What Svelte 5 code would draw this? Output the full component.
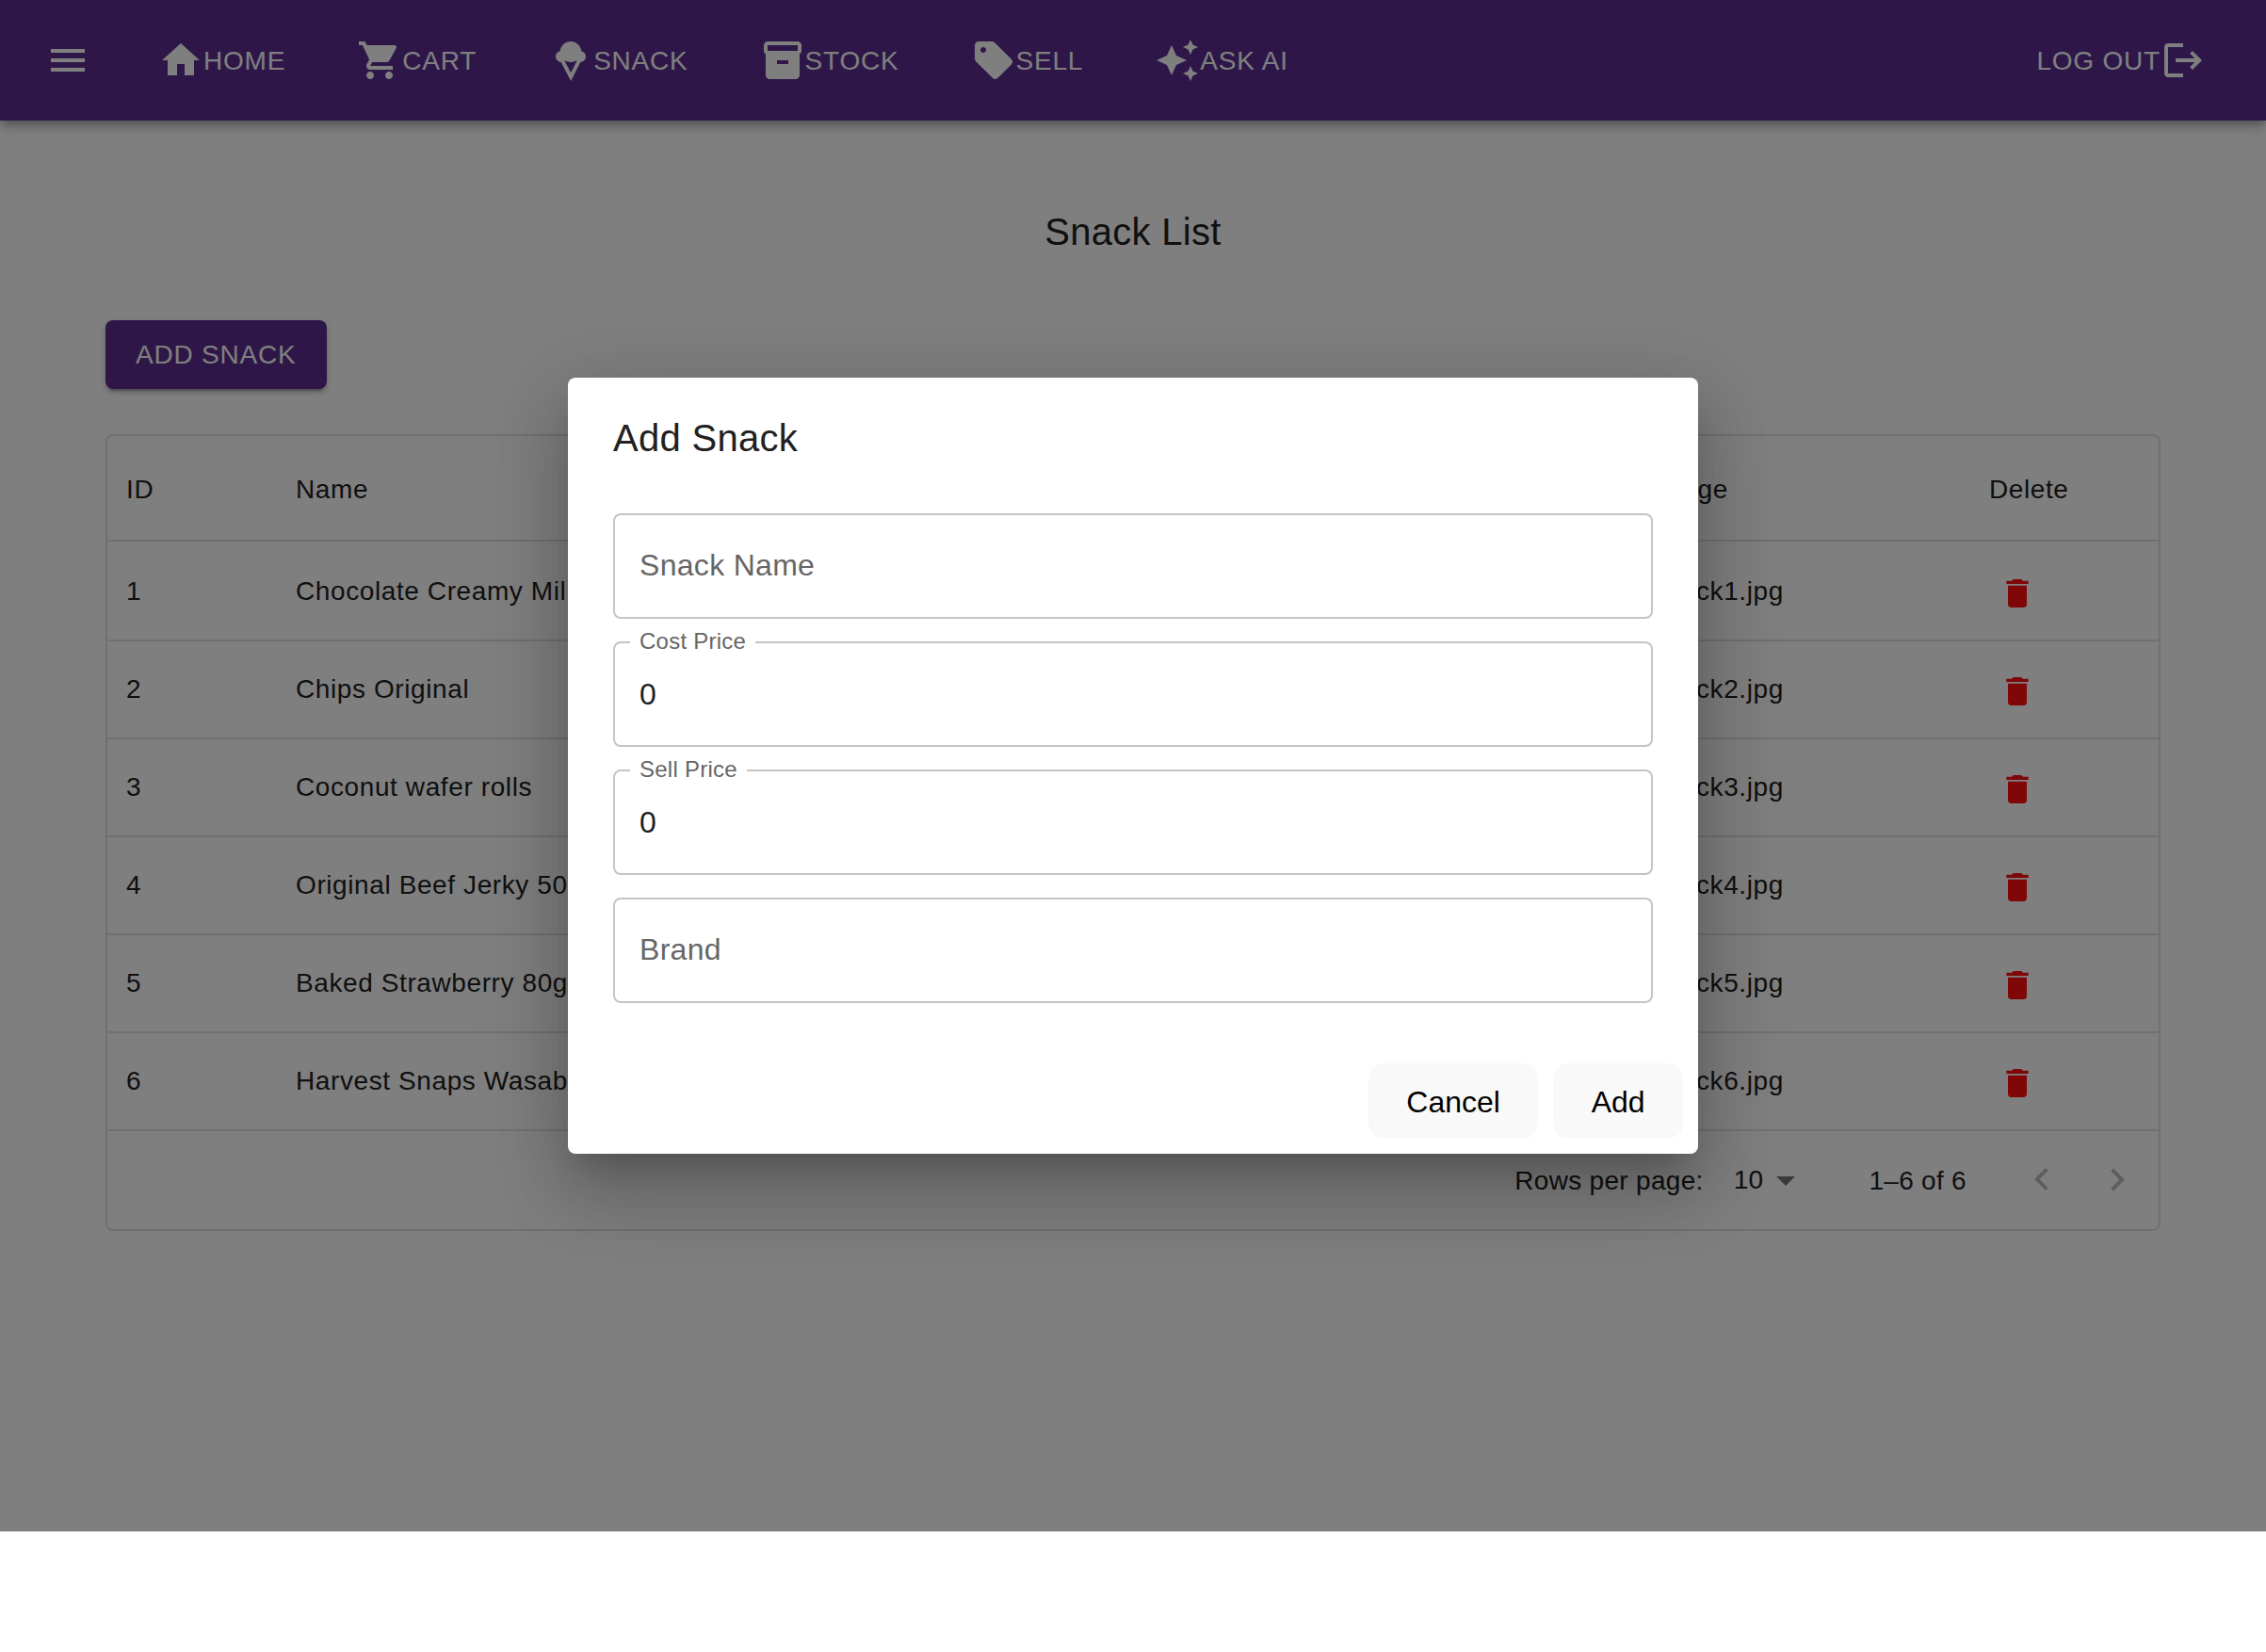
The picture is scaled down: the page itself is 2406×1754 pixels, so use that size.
<script>
  const nav = [
    { label: 'HOME', d: 'M10 20v-6h4v6h5v-8h3L12 3 2 12h3v8z' },
    {
      label: 'CART',
      d: 'M7 18c-1.1 0-1.99.9-1.99 2S5.9 22 7 22s2-.9 2-2-.9-2-2-2zM1 2v2h2l3.6 7.59-1.35 2.45c-.16.28-.25.61-.25.96 0 1.1.9 2 2 2h12v-2H7.42c-.14 0-.25-.11-.25-.25l.03-.12.9-1.63h7.45c.75 0 1.41-.41 1.75-1.03l3.58-6.49c.08-.14.12-.31.12-.48 0-.55-.45-1-1-1H5.21l-.94-2H1zm16 16c-1.1 0-1.99.9-1.99 2s.89 2 1.99 2 2-.9 2-2-.9-2-2-2z'
    },
    {
      label: 'SNACK',
      d: 'M8.79 12.4l3.26 6.22 3.17-6.21c-.11-.08-.21-.16-.3-.25-.77.53-1.8.84-2.92.84s-2.15-.31-2.92-.84c-.09.09-.19.17-.29.24zm-1.96.59C5.25 12.9 4 11.6 4 10.02c0-1.43 1.01-2.63 2.36-2.92C6.65 4.23 9.07 2 12 2s5.35 2.23 5.64 5.1C18.99 7.38 20 8.58 20 10.01c0 1.6-1.27 2.91-2.85 2.99L12.08 23 6.83 12.99z'
    },
    {
      label: 'STOCK',
      d: 'M20 2H4c-1 0-2 .9-2 2v3.01c0 .72.43 1.34 1 1.69V20c0 1.1 1.1 2 2 2h14c.9 0 2-.9 2-2V8.7c.57-.35 1-.97 1-1.69V4c0-1.1-1-2-2-2zm-5 12H9v-2h6v2zm5-7H4V4h16v3z'
    },
    {
      label: 'SELL',
      d: 'm21.41 11.41-8.83-8.83c-.37-.37-.88-.58-1.41-.58H4c-1.1 0-2 .9-2 2v7.17c0 .53.21 1.04.59 1.41l8.83 8.83c.78.78 2.05.78 2.83 0l7.17-7.17c.78-.78.78-2.04-.01-2.83zM6.5 8C5.67 8 5 7.33 5 6.5S5.67 5 6.5 5 8 5.67 8 6.5 7.33 8 6.5 8z'
    },
    {
      label: 'ASK AI',
      d: 'm19 9 1.25-2.75L23 5l-2.75-1.25L19 1l-1.25 2.75L15 5l2.75 1.25L19 9zm-7.5.5L9 4 6.5 9.5 1 12l5.5 2.5L9 20l2.5-5.5L17 12l-5.5-2.5zM19 15l-1.25 2.75L15 19l2.75 1.25L19 23l1.25-2.75L23 19l-2.75-1.25L19 15z'
    }
  ];

  const snacks = [
    'Chocolate Creamy Milk',
    'Chips Original',
    'Coconut wafer rolls',
    'Original Beef Jerky 50g',
    'Baked Strawberry 80g',
    'Harvest Snaps Wasabi'
  ].map((name, i) => ({ id: i + 1, name, image: `snack${i + 1}.jpg` }));

  const fields = [
    { label: 'Snack Name', value: '' },
    { label: 'Cost Price', value: '0' },
    { label: 'Sell Price', value: '0' },
    { label: 'Brand', value: '' }
  ];
</script>

{#snippet icon(d)}
  <svg class="icon" viewBox="0 0 24 24" aria-hidden="true"><path {d} /></svg>
{/snippet}

<div class="app">
  <header class="bar">
    <div class="menu">{@render icon('M3 18h18v-2H3v2zm0-5h18v-2H3v2zm0-7v2h18V6H3z')}</div>
    <nav>
      {#each nav as item}
        <a class="link">{@render icon(item.d)}<span>{item.label}</span></a>
      {/each}
    </nav>
    <a class="link logout">
      <span>LOG OUT</span>
      {@render icon(
        'm17 7-1.41 1.41L18.17 11H8v2h10.17l-2.58 2.58L17 17l5-5zM4 5h8V3H4c-1.1 0-2 .9-2 2v14c0 1.1.9 2 2 2h8v-2H4z'
      )}
    </a>
  </header>

  <main>
    <h1>Snack List</h1>
    <button class="add">ADD SNACK</button>

    <section class="grid">
      <div class="row head">
        <div class="cell">ID</div>
        <div class="cell">Name</div>
        <div class="cell image">Image</div>
        <div class="cell">Delete</div>
      </div>
      {#each snacks as s}
        <div class="row">
          <div class="cell">{s.id}</div>
          <div class="cell">{s.name}</div>
          <div class="cell image">{s.image}</div>
          <div class="cell trash">
            {@render icon('M6 19c0 1.1.9 2 2 2h8c1.1 0 2-.9 2-2V7H6v12zM19 4h-3.5l-1-1h-5l-1 1H5v2h14V4z')}
          </div>
        </div>
      {/each}
      <footer>
        <span class="rpp">Rows per page:</span>
        <span class="size">10</span>
        <span class="caret">{@render icon('M7 10l5 5 5-5z')}</span>
        <span class="range">1–6 of 6</span>
        <span class="pager">
          {@render icon('M15.41 16.09l-4.58-4.59 4.58-4.59L14 5.5l-6 6 6 6z')}
          {@render icon('M8.59 16.34l4.58-4.59-4.58-4.59L10 5.75l6 6-6 6z')}
        </span>
      </footer>
    </section>
  </main>

  <div class="backdrop">
    <div class="dialog" role="dialog">
      <h2>Add Snack</h2>
      <div class="fields">
        {#each fields as f}
          {#if f.value}
            <fieldset class="field">
              <legend>{f.label}</legend>
              <span class="value">{f.value}</span>
            </fieldset>
          {:else}
            <div class="field empty">{f.label}</div>
          {/if}
        {/each}
      </div>
      <div class="actions">
        <button>Cancel</button>
        <button>Add</button>
      </div>
    </div>
  </div>
</div>

<style>
  :global(body) {
    background: #fff;
  }
  .app {
    position: relative;
    height: 1626px;
    overflow: hidden;
    font-family: 'Liberation Sans', Arial, sans-serif;
    font-size: 28px;
    letter-spacing: 0.3px;
    color: #212121;
    background: #fff;
  }
  .icon {
    display: block;
    flex: none;
    width: 48px;
    height: 48px;
    fill: currentColor;
  }
  button {
    border: 0;
    font-family: inherit;
  }

  .bar {
    position: relative;
    display: flex;
    align-items: center;
    box-sizing: border-box;
    height: 128px;
    padding: 0 64px 0 48px;
    background: #5c2e91;
    color: #fff;
    box-shadow:
      0 4px 8px -2px rgba(0, 0, 0, 0.2),
      0 8px 10px 0 rgba(0, 0, 0, 0.14),
      0 2px 20px 0 rgba(0, 0, 0, 0.12);
  }
  .menu {
    margin-right: 72px;
  }
  nav {
    display: flex;
    flex: 1;
    gap: 76px;
  }
  .link {
    display: flex;
    align-items: center;
    letter-spacing: 0.8px;
    white-space: nowrap;
  }
  .link span {
    padding-top: 2px;
  }

  main {
    padding: 0 112px;
  }
  h1 {
    margin: 0;
    padding-top: 86px;
    font-size: 40px;
    line-height: 64px;
    font-weight: 400;
    text-align: center;
  }
  .add {
    display: block;
    height: 73px;
    margin-top: 62px;
    padding: 0 32px;
    border-radius: 8px;
    background: #5c2e91;
    color: #fff;
    font-size: 28px;
    letter-spacing: 0.8px;
    box-shadow:
      0 6px 2px -4px rgba(0, 0, 0, 0.2),
      0 4px 4px 0 rgba(0, 0, 0, 0.14),
      0 2px 10px 0 rgba(0, 0, 0, 0.12);
  }

  .grid {
    margin-top: 48px;
    border: 2px solid #e0e0e0;
    border-radius: 8px;
  }
  .row {
    display: grid;
    grid-template-columns: 180px 1440px 358px 1fr;
    align-items: center;
    box-sizing: border-box;
    height: 104px;
    border-bottom: 2px solid #e0e0e0;
    letter-spacing: 0.6px;
  }
  .row.head {
    height: 112px;
    padding-top: 3px;
  }
  .head + .row {
    height: 106px;
    padding-top: 2px;
  }
  .cell {
    padding-left: 20px;
    white-space: nowrap;
  }
  .trash {
    padding: 4px 0 0 30px;
    color: #ff0f0f;
  }
  .trash .icon {
    width: 40px;
    height: 40px;
  }
  footer {
    display: flex;
    align-items: center;
    justify-content: flex-end;
    height: 104px;
    padding-right: 20px;
  }
  .rpp,
  .range {
    padding-top: 2px;
  }
  .size {
    margin-left: 32px;
  }
  .caret {
    color: #757575;
  }
  .range {
    margin-left: 64px;
  }
  .pager {
    display: flex;
    gap: 32px;
    margin-left: 56px;
    color: #bdbdbd;
  }

  .backdrop {
    position: absolute;
    inset: 0;
    display: flex;
    align-items: center;
    justify-content: center;
    background: rgba(0, 0, 0, 0.5);
  }
  .dialog {
    box-sizing: border-box;
    width: 1200px;
    height: 824px;
    border-radius: 8px;
    background: #fff;
    box-shadow:
      0 22px 30px -14px rgba(0, 0, 0, 0.2),
      0 48px 76px 6px rgba(0, 0, 0, 0.14),
      0 18px 92px 16px rgba(0, 0, 0, 0.12);
  }
  h2 {
    margin: 0;
    padding: 32px 48px;
    font-size: 40px;
    line-height: 64px;
    font-weight: 400;
  }
  .fields {
    display: grid;
    gap: 24px;
    padding: 16px 48px 0;
  }
  .field {
    display: flex;
    align-items: center;
    box-sizing: border-box;
    height: 112px;
    margin: 0;
    padding: 0 26px;
    border: 2px solid #c4c4c4;
    border-radius: 8px;
    font-size: 32px;
  }
  .empty {
    padding-bottom: 2px;
    color: #666;
  }
  fieldset.field {
    display: block;
    padding: 0 16px;
  }
  legend {
    height: 2px;
    padding: 0 10px;
    font-size: 24px;
    line-height: 0;
    letter-spacing: 0.25px;
    color: #666;
  }
  .value {
    display: block;
    padding-left: 10px;
    line-height: 108px;
  }
  .actions {
    display: flex;
    justify-content: flex-end;
    gap: 16px;
    padding: 64px 16px 0;
  }
  .actions button {
    height: 80px;
    padding: 2px 40.4px 0;
    border-radius: 16px;
    background: #f9f9f9;
    color: #000;
    font-size: 32px;
  }
</style>
